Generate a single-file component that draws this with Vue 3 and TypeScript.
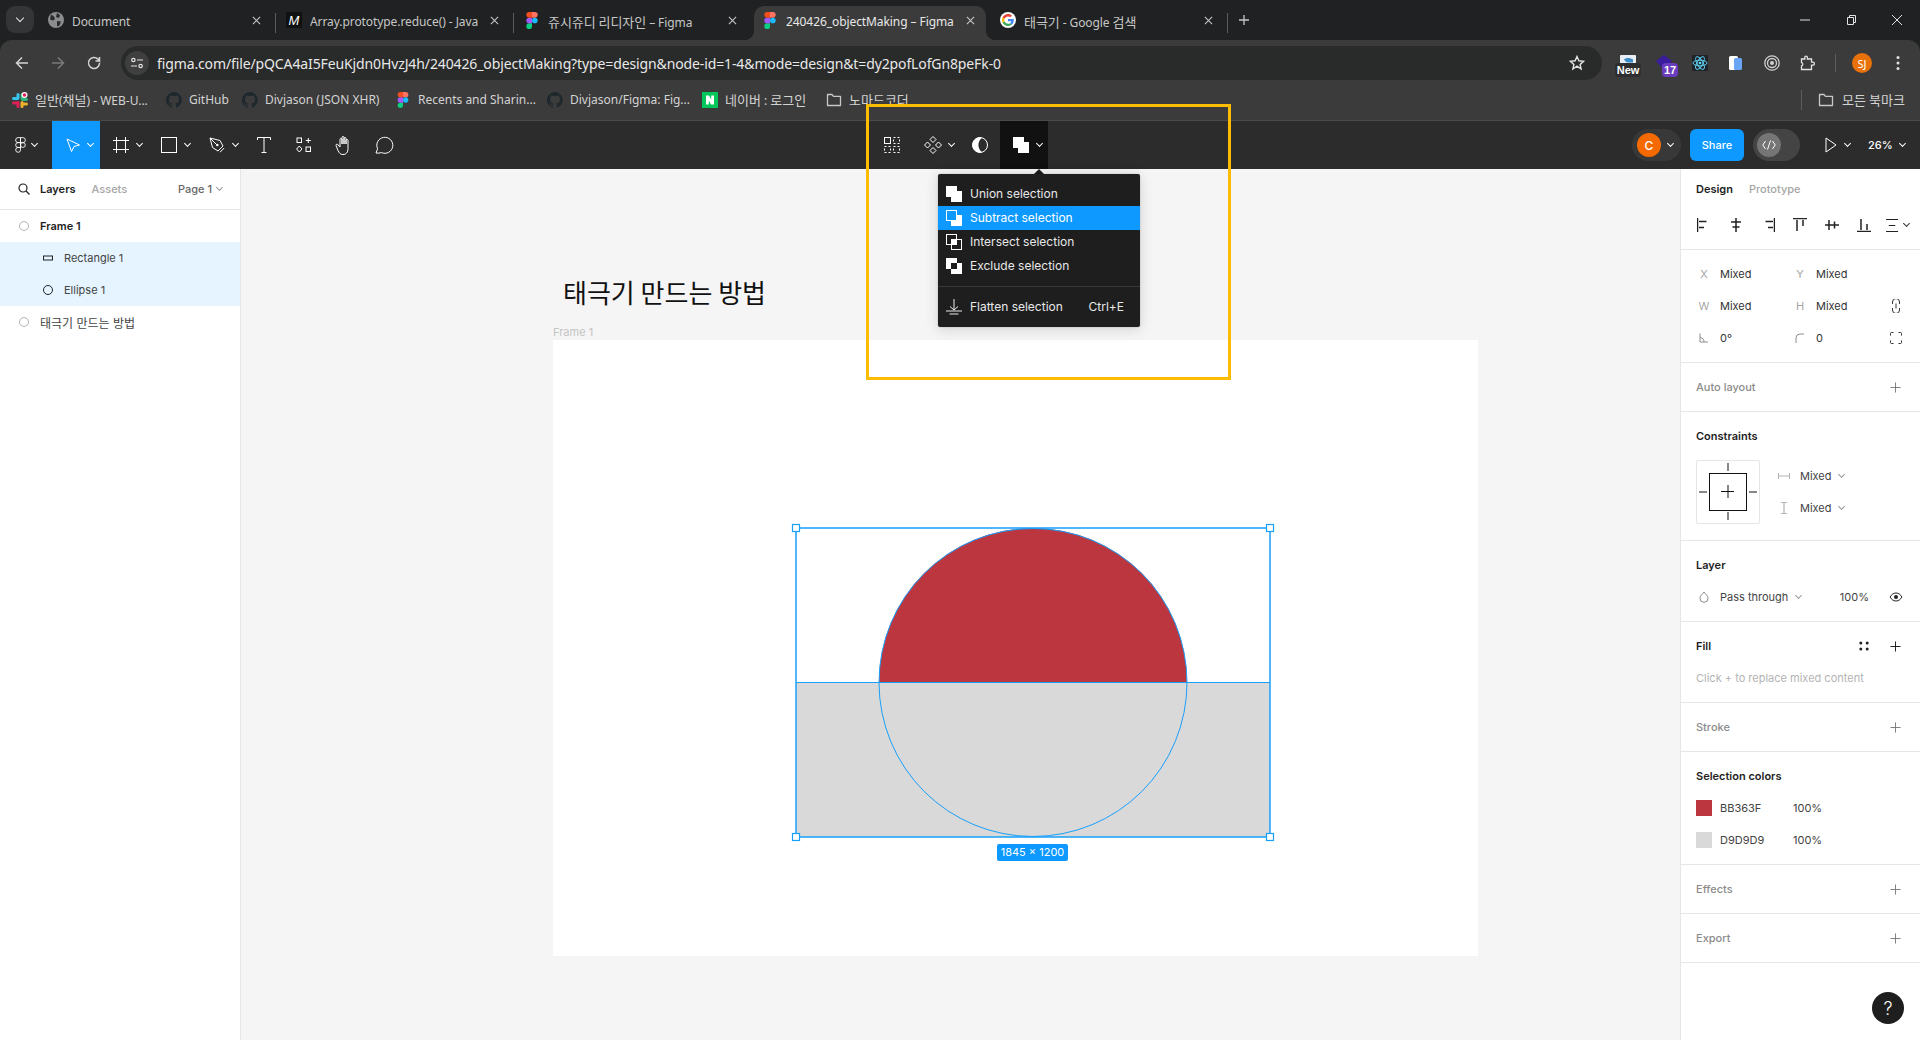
<script setup lang="ts">
interface Tab { title: string; icon: string; active?: boolean; sep?: boolean }
const tabs: Tab[] = [
  { title: 'Document', icon: 'globe', sep: true },
  { title: 'Array.prototype.reduce() - Java', icon: 'mdn', sep: true },
  { title: '쥬시쥬디 리디자인 – Figma', icon: 'figma' },
  { title: '240426_objectMaking – Figma', icon: 'figma', active: true },
  { title: '태극기 - Google 검색', icon: 'google', sep: true },
]
const bookmarks = [
  { title: '일반(채널) - WEB-U...', icon: 'slack', width: 154 },
  { title: 'GitHub', icon: 'github', width: 76 },
  { title: 'Divjason (JSON XHR)', icon: 'github', width: 153 },
  { title: 'Recents and Sharin...', icon: 'figma', width: 152 },
  { title: 'Divjason/Figma: Fig...', icon: 'github', width: 155 },
  { title: '네이버 : 로그인', icon: 'naver', width: 124 },
  { title: '노마드코더', icon: 'folder', width: 90 },
]
const boolItems = [
  { label: 'Union selection', icon: 'b-union' },
  { label: 'Subtract selection', icon: 'b-subtract', active: true },
  { label: 'Intersect selection', icon: 'b-intersect' },
  { label: 'Exclude selection', icon: 'b-exclude' },
]
const layers = [
  { name: 'Frame 1', icon: 'frame', strong: true },
  { name: 'Rectangle 1', icon: 'rect', child: true },
  { name: 'Ellipse 1', icon: 'ellipse', child: true },
  { name: '태극기 만드는 방법', icon: 'frame', ko: true },
]
const alignIcons = ['a-left', 'a-hc', 'a-right', 'a-top', 'a-vc', 'a-bottom']
const colors = [
  { hex: 'BB363F', css: '#bb363f' },
  { hex: 'D9D9D9', css: '#d9d9d9' },
]
const handles = [[796, 528], [1270, 528], [796, 837], [1270, 837]]

// Hangul runs are set a size larger so that their advance matches the reference's wider Korean face.
function segs(s: string): { text: string; ko: boolean }[] {
  return s
    .split(/([가-힣]+)/)
    .filter(Boolean)
    .map((text) => ({ text, ko: /[가-힣]/.test(text) }))
}
</script>

<template>
  <div class="page">
    <svg class="sprite" aria-hidden="true">
      <defs>
        <symbol id="figma" viewBox="0 0 12 18">
          <path d="M3 18a3 3 0 0 0 3-3v-3H3a3 3 0 0 0 0 6z" fill="#0acf83" />
          <path d="M0 9a3 3 0 0 1 3-3h3v6H3a3 3 0 0 1-3-3z" fill="#a259ff" />
          <path d="M0 3a3 3 0 0 1 3-3h3v6H3a3 3 0 0 1-3-3z" fill="#f24e1e" />
          <path d="M6 0h3a3 3 0 0 1 0 6H6z" fill="#ff7262" />
          <circle cx="9" cy="9" r="3" fill="#1abcfe" />
        </symbol>
        <symbol id="globe" viewBox="0 0 16 16">
          <circle cx="8" cy="8" r="8" fill="#8b8c8d" />
          <path d="M3 2.500l3 2 1 2.500-2 1.500-3-1zM9 1l3 2-1 3-3-1zM9 9l4 .5-1.500 4-2.500 1z" fill="#2a2b2c" />
        </symbol>
        <symbol id="mdn" viewBox="0 0 16 16">
          <rect width="16" height="16" fill="#111" />
          <text x="8" y="13" font-size="13" font-style="italic" font-family="Liberation Sans, sans-serif" fill="#fff" text-anchor="middle">M</text>
        </symbol>
        <symbol id="google" viewBox="0 0 16 16">
          <circle cx="8" cy="8" r="8" fill="#fff" />
          <path d="M13.800 8.200c0-.5 0-.9-.1-1.300H8v2.400h3.300c-.1.800-.6 1.400-1.200 1.900l1.900 1.400c1.100-1 1.800-2.600 1.800-4.400z" fill="#4285f4" />
          <path d="M8 14c1.600 0 3-.5 4-1.400l-1.900-1.400c-.5.400-1.200.6-2.100.6-1.600 0-2.900-1-3.400-2.500l-2 1.500C3.600 12.700 5.600 14 8 14z" fill="#34a853" />
          <path d="M4.600 9.300c-.3-.8-.3-1.800 0-2.600l-2-1.500c-.8 1.700-.8 3.900 0 5.600z" fill="#fbbc05" />
          <path d="M8 4.400c.9 0 1.700.3 2.300.9L12 3.600C11 2.600 9.600 2 8 2 5.600 2 3.600 3.300 2.600 5.200l2 1.500C5.100 5.400 6.400 4.400 8 4.400z" fill="#ea4335" />
        </symbol>
        <symbol id="slack" viewBox="0 0 16 16">
          <rect x="4.500" y="1" width="3" height="6.500" rx="1.500" fill="#36c5f0" />
          <rect x="0" y="5" width="7" height="3" rx="1.500" fill="#36c5f0" />
          <rect x="9" y="6" width="7" height="3" rx="1.500" fill="#2eb67d" />
          <rect x="8.500" y="1" width="3" height="7" rx="1.500" fill="#2eb67d" />
          <rect x="8.500" y="9" width="3" height="7" rx="1.500" fill="#ecb22e" />
          <rect x="9" y="10.500" width="7" height="3" rx="1.500" fill="#ecb22e" />
          <rect x="4.500" y="9" width="3" height="7" rx="1.500" fill="#e01e5a" />
          <rect x="0" y="9.500" width="7" height="3" rx="1.500" fill="#e01e5a" />
          <circle cx="12.500" cy="3" r="3" fill="#fff" /><circle cx="12.500" cy="3" r="1.800" fill="#e01e5a" />
        </symbol>
        <symbol id="github" viewBox="0 0 16 16">
          <path fill="#1e272c" d="M8 0a8 8 0 0 0-2.500 15.600c.4.100.5-.2.500-.4v-1.400c-2.200.5-2.700-1-2.700-1-.4-.9-.9-1.200-.9-1.200-.7-.5.100-.5.100-.5.800.100 1.200.8 1.200.8.700 1.200 1.900.9 2.300.7.100-.5.300-.9.500-1.100-1.800-.2-3.600-.9-3.600-4 0-.9.300-1.600.8-2.100-.1-.2-.4-1 .1-2.100 0 0 .7-.2 2.200.8a7.500 7.500 0 0 1 4 0c1.500-1 2.200-.8 2.200-.8.400 1.100.2 1.900.1 2.100.5.500.8 1.200.8 2.100 0 3.100-1.900 3.700-3.700 3.900.3.300.6.700.6 1.500v2.200c0 .2.100.5.500.4A8 8 0 0 0 8 0z" />
        </symbol>
        <symbol id="naver" viewBox="0 0 16 16">
          <rect width="16" height="16" fill="#03c75a" />
          <path d="M4 3.500h3l2.200 4v-4H12v9H9l-2.200-4v4H4z" fill="#fff" />
        </symbol>
        <symbol id="folder" viewBox="0 0 16 16">
          <path d="M1.500 2.500h4.500l1.500 1.800h7v9.200h-13z" fill="none" stroke="#c7c7c7" stroke-width="1.300" stroke-linejoin="round" />
        </symbol>
        <symbol id="plus" viewBox="0 0 12 12"><path d="M6 .5v11M.5 6h11" fill="none" stroke="currentColor" /></symbol>
        <symbol id="frame" viewBox="0 0 12 12"><circle cx="6" cy="6" r="4.500" fill="none" stroke="#b3b3b3" /></symbol>
        <symbol id="rect" viewBox="0 0 12 12"><rect x="1.500" y="4" width="9" height="4" fill="none" stroke="#222" stroke-width="1" /></symbol>
        <symbol id="ellipse" viewBox="0 0 12 12"><circle cx="6" cy="6" r="4.500" fill="none" stroke="#222" /></symbol>
        <symbol id="a-left" viewBox="0 0 14 14"><path d="M.5 0v14M2 3.500h7.500M2 9.500h5" fill="none" stroke="#222" stroke-width="1.500" /></symbol>
        <symbol id="a-hc" viewBox="0 0 14 14"><path d="M7 0v14M2 4h10M3.500 9h7" fill="none" stroke="#222" stroke-width="1.500" /></symbol>
        <symbol id="a-right" viewBox="0 0 14 14"><path d="M13.500 0v14M12 3.500H4.500M12 9.500H7" fill="none" stroke="#222" stroke-width="1.500" /></symbol>
        <symbol id="a-top" viewBox="0 0 14 14"><path d="M0 .5h14M4 2v11M10 2v6" fill="none" stroke="#222" stroke-width="1.500" /></symbol>
        <symbol id="a-vc" viewBox="0 0 14 14"><path d="M0 7h14M4 2v10M9.500 3.500v7" fill="none" stroke="#222" stroke-width="1.500" /></symbol>
        <symbol id="a-bottom" viewBox="0 0 14 14"><path d="M0 13.500h14M4 12V1M10 12V6" fill="none" stroke="#222" stroke-width="1.500" /></symbol>
        <symbol id="b-union" viewBox="0 0 16 16"><path d="M0 0h11v5h5v11H5v-5H0z" fill="#fff" /></symbol>
        <symbol id="b-subtract" viewBox="0 0 16 16"><path d="M11 5h5v11H5v-5h6z" fill="#fff" /><rect x=".5" y=".5" width="10" height="10" fill="none" stroke="#fff" /></symbol>
        <symbol id="b-intersect" viewBox="0 0 16 16"><rect x=".5" y=".5" width="10" height="10" fill="none" stroke="#fff" /><rect x="5.500" y="5.500" width="10" height="10" fill="none" stroke="#fff" /><rect x="5" y="5" width="6" height="6" fill="#fff" /></symbol>
        <symbol id="b-exclude" viewBox="0 0 16 16"><path d="M0 0h11v5H5v6H0zM11 5h5v11H5v-5h6z" fill="#fff" /></symbol>
      </defs>
    </svg>

    <header class="tabstrip">
      <div class="tab-search"><i class="chev chev-big"></i></div>
      <div v-for="t in tabs" :key="t.title" class="tab" :class="{ active: t.active, sep: t.sep }">
        <svg class="fav" :class="{ 'fav-figma': t.icon === 'figma' }"><use :href="'#' + t.icon" /></svg>
        <span class="tab-title"><span v-for="(s, i) in segs(t.title)" :key="i" :class="{ ko: s.ko }">{{ s.text }}</span></span>
        <svg class="tab-x" viewBox="0 0 10 10"><path d="M1 1l8 8M9 1l-8 8" fill="none" stroke="#c7c7c7" stroke-width="1.200" /></svg>
      </div>
      <svg class="newtab" viewBox="0 0 12 12"><path d="M6 1v10M1 6h10" fill="none" stroke="#c7c7c7" stroke-width="1.300" /></svg>
      <div class="winbtns">
        <svg viewBox="0 0 12 12"><path d="M1 6h10" stroke="#e3e3e3" fill="none" /></svg>
        <svg viewBox="0 0 12 12"><path d="M2.500 3.500h6v7h-6zM4.500 3.500v-2h6v7h-2" stroke="#e3e3e3" fill="none" /></svg>
        <svg viewBox="0 0 12 12"><path d="M1 1l10 10M11 1L1 11" stroke="#e3e3e3" fill="none" /></svg>
      </div>
    </header>

    <div class="chrome-body">
      <div class="navbar">
        <svg class="nav-ic" viewBox="0 0 16 16"><path d="M14 8H2.500M8 2.500L2.500 8 8 13.500" fill="none" stroke="#d5d5d5" stroke-width="1.500" /></svg>
        <svg class="nav-ic" viewBox="0 0 16 16"><path d="M2 8h11.500M8 2.500L13.500 8 8 13.500" fill="none" stroke="#7a7a7a" stroke-width="1.500" /></svg>
        <svg class="nav-ic" viewBox="0 0 16 16"><path d="M13.500 8a5.500 5.500 0 1 1-1.600-3.900L13.500 6V2M13.500 6H9.500" fill="none" stroke="#d5d5d5" stroke-width="1.500" /></svg>
        <div class="omnibox">
          <span class="site-ic">
            <svg viewBox="0 0 14 14"><path d="M7 4h6M1 10h6" stroke="#e3e3e3" fill="none" stroke-width="1.200" /><circle cx="3.400" cy="4" r="1.700" fill="none" stroke="#e3e3e3" stroke-width="1.200" /><circle cx="10.600" cy="10" r="1.700" fill="none" stroke="#e3e3e3" stroke-width="1.200" /></svg>
          </span>
          <span class="url">figma.com/file/pQCA4aI5FeuKjdn0HvzJ4h/240426_objectMaking?type=design&amp;node-id=1-4&amp;mode=design&amp;t=dy2pofLofGn8peFk-0</span>
          <svg class="star" viewBox="0 0 16 16"><path d="M8 1.500l1.900 4.300 4.600.5-3.400 3.100 1 4.600L8 11.200l-4.100 2.800 1-4.600L1.500 6.300l4.600-.5z" fill="none" stroke="#e3e3e3" stroke-width="1.400" /></svg>
        </div>
        <div class="exts">
          <span class="ext ext-new">
            <svg viewBox="0 0 16 16"><rect x="0" y="0" width="16" height="12" rx="1" fill="#e8eef5" /><path d="M4 4.500c2-2 6-2 9 0v3H8c-2 0-3-1.500-4-3z" fill="#3f8ccb" /></svg>
            <b>New</b>
          </span>
          <span class="ext ext-17">
            <svg viewBox="0 0 16 16"><path d="M8 0l8 6-8 9-8-9z" fill="#3b1c9c" /></svg>
            <b>17</b>
          </span>
          <span class="ext">
            <svg viewBox="0 0 16 16"><rect width="16" height="16" fill="#20232a" /><g fill="none" stroke="#61dafb" stroke-width=".9"><ellipse cx="8" cy="8" rx="7" ry="2.800" /><ellipse cx="8" cy="8" rx="7" ry="2.800" transform="rotate(60 8 8)" /><ellipse cx="8" cy="8" rx="7" ry="2.800" transform="rotate(120 8 8)" /></g><circle cx="8" cy="8" r="1.300" fill="#61dafb" /></svg>
          </span>
          <span class="ext">
            <svg viewBox="0 0 16 16"><rect x="1" y="1" width="9" height="14" rx="1.500" fill="#fff" /><rect x="6" y="3" width="8" height="12" rx="1.500" fill="#6aa6f8" /></svg>
          </span>
          <span class="ext">
            <svg viewBox="0 0 16 16"><circle cx="8" cy="8" r="7.200" fill="none" stroke="#cfcfcf" stroke-width="1.300" /><circle cx="8" cy="8" r="4.500" fill="none" stroke="#cfcfcf" stroke-width="1.300" /><circle cx="8" cy="8" r="2" fill="#cfcfcf" /></svg>
          </span>
          <span class="ext">
            <svg viewBox="0 0 16 16"><path d="M1.500 4h3.300V2.500a1.300 1.300 0 0 1 2.600 0V4h4.100v3.200h1.400a1.500 1.500 0 0 1 0 3h-1.400v4.300H1.500v-3.600a1.700 1.700 0 0 0 0-3.300z" fill="none" stroke="#e3e3e3" stroke-width="1.300" /></svg>
          </span>
          <span class="ext-sep"></span>
          <span class="profile">SJ</span>
          <svg class="dots" viewBox="0 0 4 16"><circle cx="2" cy="2.500" r="1.500" fill="#e3e3e3" /><circle cx="2" cy="8" r="1.500" fill="#e3e3e3" /><circle cx="2" cy="13.500" r="1.500" fill="#e3e3e3" /></svg>
        </div>
      </div>

      <div class="bookmarks">
        <div v-for="b in bookmarks" :key="b.title" class="bm" :style="{ width: b.width + 'px' }">
          <svg class="bm-ic"><use :href="'#' + b.icon" /></svg>
          <span class="bm-text"><span v-for="(s, i) in segs(b.title)" :key="i" :class="{ ko: s.ko }">{{ s.text }}</span></span>
        </div>
        <div class="bm-all">
          <span class="bm-sep"></span>
          <svg class="bm-ic bm-ic-all"><use href="#folder" /></svg>
          <span class="bm-text"><span v-for="(s, i) in segs('모든 북마크')" :key="i" :class="{ ko: s.ko }">{{ s.text }}</span></span>
        </div>
      </div>
    </div>

    <div class="toolbar">
      <div class="tb-left">
        <div class="tool tool-logo tool-caret">
          <svg class="logo" viewBox="0 0 12 18" fill="none" stroke="#fff"><path d="M6 .7H3.300a2.700 2.700 0 0 0 0 5.600H6zM6 .7h2.700a2.700 2.700 0 0 1 0 5.600H6zM6 6.300H3.300a2.700 2.700 0 0 0 0 5.500H6zM6 11.800H3.300a2.700 2.700 0 1 0 2.700 2.700z" /><circle cx="8.700" cy="9" r="2.700" /></svg>
          <i class="chev"></i>
        </div>
        <div class="tool tool-move tool-caret">
          <svg class="ic16" viewBox="0 0 16 16"><path d="M2 2l12.500 6L9 9.500l-2.500 5z" fill="none" stroke="#fff" stroke-linejoin="round" /></svg>
          <i class="chev"></i>
        </div>
        <div class="tool tool-caret">
          <svg class="ic16" viewBox="0 0 16 16"><path d="M3.500 0v16M12.500 0v16M0 3.500h16M0 12.500h16" fill="none" stroke="#fff" /></svg>
          <i class="chev"></i>
        </div>
        <div class="tool tool-caret">
          <svg class="ic16" viewBox="0 0 16 16"><rect x=".5" y=".5" width="15" height="15" fill="none" stroke="#fff" /></svg>
          <i class="chev"></i>
        </div>
        <div class="tool tool-caret">
          <svg class="ic16" viewBox="0 0 16 16"><path d="M1 1l10 2.500L14 9l-5 5-5.500-3.500zM1 1l6.300 6.300M11 15.200l4.200-4.200" fill="none" stroke="#fff" stroke-linejoin="round" /><circle cx="8.300" cy="8" r="1.300" fill="#fff" /></svg>
          <i class="chev"></i>
        </div>
        <div class="tool tool-s">
          <svg class="ic16" viewBox="0 0 16 16"><path d="M1.500 3V.5h13V3M8 .5v15M5.500 15.500h5" fill="none" stroke="#fff" /></svg>
        </div>
        <div class="tool tool-s">
          <svg class="ic16" viewBox="0 0 16 16"><rect x="1" y="1" width="4.500" height="4.500" fill="none" stroke="#fff" /><rect x="10" y="10" width="4.500" height="4.500" fill="none" stroke="#fff" /><path d="M3.300 9l2.700 3-2.700 3L.6 12zM12.300 1v5M9.800 3.500h5" fill="none" stroke="#fff" /></svg>
        </div>
        <div class="tool tool-s">
          <svg class="ic20" viewBox="0 0 20 20"><path d="M6 12V4.500a1 1 0 0 1 2 0V9 2.500a1 1 0 0 1 2 0V9 3.500a1 1 0 0 1 2 0V9 5.500a1 1 0 0 1 2 0v8c0 4-2 6-5 6-2.500 0-3.500-1-5-4L2 10.500a1 1 0 0 1 2-.5z" fill="none" stroke="#fff" stroke-linejoin="round" /></svg>
        </div>
        <div class="tool tool-s">
          <svg class="ic20" viewBox="0 0 20 20"><path d="M2 18l1.600-4.200A8 8 0 1 1 7.500 17.600 11 11 0 0 1 2 18z" fill="none" stroke="#fff" stroke-linejoin="round" /></svg>
        </div>
      </div>

      <div class="tb-center">
        <div class="tool">
          <svg class="ic16" viewBox="0 0 16 16"><rect x=".5" y=".5" width="6" height="6" fill="none" stroke="#fff" /><g fill="none" stroke="#fff" stroke-dasharray="2 2.000"><rect x="9.500" y=".5" width="6" height="6" /><rect x=".5" y="9.500" width="6" height="6" /><rect x="9.500" y="9.500" width="6" height="6" /></g></svg>
        </div>
        <div class="tool tool-comp tool-caret">
          <svg class="ic18" viewBox="0 0 18 18"><path d="M9 .5L12 3.500 9 6.500 6 3.500zM3.500 6L6.500 9 3.500 12 .5 9zM14.500 6L17.500 9l-3 3-3-3zM9 11.500l3 3-3 3-3-3z" fill="none" stroke="#fff" /></svg>
          <i class="chev"></i>
        </div>
        <div class="tool tool-s">
          <svg class="ic16" viewBox="0 0 16 16"><circle cx="8" cy="8" r="7.500" fill="none" stroke="#fff" /><path d="M10 .8A7.500 7.500 0 1 0 10 15.200 9 9 0 0 1 10 .8z" fill="#fff" /></svg>
        </div>
        <div class="tool tool-bool tool-caret">
          <svg class="ic16"><use href="#b-union" /></svg>
          <i class="chev"></i>
          <i class="caret"></i>
        </div>
      </div>

      <div class="tb-right">
        <div class="multi"><span class="avatar">C</span><i class="chev"></i></div>
        <button class="share">Share</button>
        <div class="devmode"><span class="knob">
          <svg viewBox="0 0 14 10"><path d="M3.500 1L.8 5l2.700 4M10.500 1l2.700 4-2.700 4M8.500.5l-3 9" fill="none" stroke="#fff" /></svg>
        </span></div>
        <svg class="play" viewBox="0 0 12 16"><path d="M1 1l10 7-10 7z" fill="none" stroke="#fff" /></svg>
        <i class="chev chev-play"></i>
        <span class="zoom">26%</span>
        <i class="chev chev-zoom"></i>
      </div>
    </div>

    <main class="workspace">
      <aside class="left">
        <div class="left-head">
          <svg class="search" viewBox="0 0 12 12"><circle cx="5" cy="5" r="4" fill="none" stroke="#222" stroke-width="1.200" /><path d="M8 8l3.500 3.500" stroke="#222" stroke-width="1.200" /></svg>
          <span class="lt-active">Layers</span>
          <span class="lt-muted">Assets</span>
          <span class="page-sel">Page 1 <i class="chev chev-muted"></i></span>
        </div>
        <div v-for="l in layers" :key="l.name" class="layer" :class="{ child: l.child, strong: l.strong, 'layer-ko': l.ko }">
          <svg class="layer-ic"><use :href="'#' + l.icon" /></svg>
          <span>{{ l.name }}</span>
        </div>
      </aside>

      <section class="canvas">
        <div class="title-node">태극기 만드는 방법</div>
        <div class="frame-label">Frame 1</div>
        <div class="frame"></div>
        <svg class="art" viewBox="241 169 1439 871">
          <rect x="796" y="682" width="474" height="155" fill="#d9d9d9" />
          <path d="M879 682a154 154 0 0 1 308 0z" fill="#bb363f" />
          <g fill="none" stroke="#18a0fb">
            <rect x="796" y="528" width="474" height="309" stroke-width="1.500" />
            <circle cx="1033" cy="682.500" r="154" />
            <path d="M796 682.500h474" stroke-width="1.200" />
          </g>
          <rect v-for="h in handles" :key="h.join()" :x="h[0] - 3.500" :y="h[1] - 3.500" width="7" height="7" fill="#fff" stroke="#18a0fb" stroke-width="1.200" />
        </svg>
        <div class="size-badge">1845 × 1200</div>
      </section>

      <aside class="right">
        <section class="sec sec-head">
          <div class="dz-tabs"><span class="lt-active">Design</span><span class="lt-muted">Prototype</span></div>
          <div class="aligns">
            <svg v-for="a in alignIcons" :key="a" class="al"><use :href="'#' + a" /></svg>
            <span class="dist">
              <svg viewBox="0 0 14 14"><path d="M0 .5h13M0 13.500h13M3 7h7" fill="none" stroke="#222" stroke-width="1.200" /></svg>
              <i class="chev chev-dark"></i>
            </span>
          </div>
        </section>

        <section class="sec sec-xy">
          <div class="xy-row">
            <span class="xy-lab">X</span><span class="xy-val">Mixed</span>
            <span class="xy-lab">Y</span><span class="xy-val">Mixed</span>
          </div>
          <div class="xy-row">
            <span class="xy-lab">W</span><span class="xy-val">Mixed</span>
            <span class="xy-lab">H</span><span class="xy-val">Mixed</span>
            <svg class="xy-end" viewBox="0 0 8 14"><path d="M.5 5V3a3.500 3.500 0 0 1 7 0v2M.5 9v2a3.500 3.500 0 0 0 7 0V9M4 4.500v5" fill="none" stroke="#333" /></svg>
          </div>
          <div class="xy-row">
            <span class="xy-lab"><svg class="xy-ic" viewBox="0 0 10 10"><path d="M1 .5V9h8M1 4.500a4.500 4.500 0 0 1 4 4.500" fill="none" stroke="#8c8c8c" /></svg></span><span class="xy-val">0°</span>
            <span class="xy-lab"><svg class="xy-ic" viewBox="0 0 10 10"><path d="M1 10V5a4 4 0 0 1 4-4h4" fill="none" stroke="#8c8c8c" /></svg></span><span class="xy-val">0</span>
            <svg class="xy-end xy-end-wide" viewBox="0 0 12 12"><path d="M.5 3.500v-2a1 1 0 0 1 1-1h2M8.500.5h2a1 1 0 0 1 1 1v2M11.500 8.500v2a1 1 0 0 1-1 1h-2M3.500 11.500h-2a1 1 0 0 1-1-1v-2" fill="none" stroke="#333" /></svg>
          </div>
        </section>

        <section class="sec sec-line"><span class="muted-h">Auto layout</span><svg class="plus plus-muted"><use href="#plus" /></svg></section>

        <section class="sec sec-cons">
          <div class="sec-title">Constraints</div>
          <div class="cons-body">
            <div class="cons-box">
              <i class="cb-inner"></i>
              <svg class="cb-plus" viewBox="0 0 64 64"><path d="M32 3v8M32 52v8M3 32h8M53 32h8M32 25v13M25 31.500h13" fill="none" stroke="#111" /></svg>
            </div>
            <div class="cons-sel">
              <div class="cs-row"><svg class="cs-ic" viewBox="0 0 12 12"><path d="M.5 3v6M11.500 3v6M1 6h10" stroke="#b3b3b3" fill="none" /></svg><span>Mixed</span><i class="chev chev-muted"></i></div>
              <div class="cs-row"><svg class="cs-ic" viewBox="0 0 12 12"><path d="M3 .5h6M3 11.500h6M6 1v10" stroke="#b3b3b3" fill="none" stroke-width="1.200" /></svg><span>Mixed</span><i class="chev chev-muted"></i></div>
            </div>
          </div>
        </section>

        <section class="sec sec-layer">
          <div class="sec-title">Layer</div>
          <div class="layer-row">
            <svg class="drop" viewBox="0 0 10 12"><path d="M5 1C3.500 3 1 4.800 1 7.300a4 4 0 0 0 8 0C9 4.800 6.500 3 5 1z" fill="none" stroke="#8c8c8c" /></svg>
            <span class="blend">Pass through</span><i class="chev chev-muted"></i>
            <span class="opacity">100%</span>
            <svg class="eye" viewBox="0 0 14 10"><path d="M1 5c1.500-2.500 3.500-4 6-4s4.500 1.500 6 4c-1.500 2.500-3.500 4-6 4S2.500 7.500 1 5z" fill="none" stroke="#222" /><circle cx="7" cy="5" r="2" fill="#222" /></svg>
          </div>
        </section>

        <section class="sec sec-fill">
          <div class="fill-head">
            <div class="sec-title">Fill</div>
            <svg class="dots4" viewBox="0 0 10 10"><circle cx="1.800" cy="2" r="1.500" /><circle cx="8.200" cy="2" r="1.500" /><circle cx="1.800" cy="8" r="1.500" /><circle cx="8.200" cy="8" r="1.500" /></svg>
            <svg class="plus plus-dark"><use href="#plus" /></svg>
          </div>
          <div class="fill-note">Click + to replace mixed content</div>
        </section>

        <section class="sec sec-line"><span class="muted-h">Stroke</span><svg class="plus plus-muted"><use href="#plus" /></svg></section>

        <section class="sec sec-colors">
          <div class="sec-title">Selection colors</div>
          <div class="color-list">
            <div v-for="c in colors" :key="c.hex" class="color-row">
              <i class="swatch" :style="{ background: c.css }"></i>
              <span class="hex">{{ c.hex }}</span>
              <span>100%</span>
            </div>
          </div>
        </section>

        <section class="sec sec-line"><span class="muted-h">Effects</span><svg class="plus plus-muted"><use href="#plus" /></svg></section>
        <section class="sec sec-line"><span class="muted-h">Export</span><svg class="plus plus-muted"><use href="#plus" /></svg></section>
      </aside>
    </main>

    <div class="bool-menu">
      <div v-for="m in boolItems" :key="m.label" class="menu-row" :class="{ on: m.active }">
        <svg class="ic16"><use :href="'#' + m.icon" /></svg>
        <span>{{ m.label }}</span>
      </div>
      <div class="menu-sep"></div>
      <div class="menu-row">
        <svg class="ic16" viewBox="0 0 16 16"><path d="M8 1v11M4 8.500l4 3.500 4-3.500M0 13h16M3.500 16h9" transform="translate(0 -1)" fill="none" stroke="#e8e8e8" /></svg>
        <span>Flatten selection</span>
        <span class="shortcut">Ctrl+E</span>
      </div>
    </div>

    <div class="highlight"></div>
    <button class="help">?</button>
  </div>
</template>

<style>
html, body { margin: 0; background: #fff; }
</style>

<style scoped>
.page { position: relative; width: 1920px; height: 1040px; overflow: hidden; display: flex; flex-direction: column; font-family: Inter, "Noto Sans CJK KR", sans-serif; font-size: 11px; color: #333; background: #1f2122; }
.sprite { position: absolute; width: 0; height: 0; }
.chev { display: inline-block; width: 4px; height: 4px; border-right: 1px solid #fff; border-bottom: 1px solid #fff; transform: rotate(45deg); flex: none; margin-top: -3px; }
.ko { font-size: 13px; }

.tabstrip { height: 40px; flex: none; display: flex; align-items: flex-end; font-family: "Noto Sans", "Noto Sans CJK KR", sans-serif; font-size: 12px; color: #c7c7c7; box-sizing: border-box; padding-left: 6px; }
.tab-search { width: 28px; height: 27px; margin: 0 4px 7px 0; background: #343536; border-radius: 9px; display: flex; align-items: center; justify-content: center; }
.chev-big { width: 5px; height: 5px; border-width: 1.500px; border-color: #e3e3e3; }
.tab { position: relative; width: 238px; height: 34px; box-sizing: border-box; padding: 0 0 6px 10px; display: flex; align-items: center; flex: none; }
.tab.sep::after { content: ""; position: absolute; right: 0; top: 7px; width: 1px; height: 20px; background: #5a5b5c; }
.tab.active { color: #e8e8e8; }
.tab.active::before { content: ""; position: absolute; left: 2px; right: 4px; top: 0; bottom: 0; background: #3b3b3b; border-radius: 10px 10px 0 0; }
.tab.active::after { content: ""; position: absolute; left: -8px; right: -6px; bottom: 0; height: 10px; background: radial-gradient(circle at 0 0, transparent 10px, #3b3b3b 10.500px) left / 10px 10px no-repeat, radial-gradient(circle at 100% 0, transparent 10px, #3b3b3b 10.500px) right / 10px 10px no-repeat; }
.fav { position: relative; width: 16px; height: 16px; flex: none; margin-right: 8px; }
.fav-figma { height: 17px; }
.tab-title { position: relative; width: 170px; margin-top: 2px; overflow: hidden; white-space: nowrap; flex: none; letter-spacing: -.08px; }
.tab-x { position: relative; width: 9px; height: 9px; margin-left: 10px; flex: none; }
.newtab { width: 12px; height: 12px; margin: 0 0 14px 10px; flex: none; }
.winbtns { margin: 0 17px 14px auto; display: flex; gap: 34px; }
.winbtns svg { width: 12px; height: 12px; }

.chrome-body { flex: none; background: #3b3b3b; border-radius: 12px 12px 0 0; }
.navbar { height: 40px; display: flex; align-items: center; padding: 0 0 0 14px; box-sizing: border-box; }
.nav-ic { width: 16px; height: 16px; margin: 6px 20px 0 0; flex: none; }
.nav-ic:nth-child(3) { margin-right: 19px; }
.omnibox { width: 1481px; height: 34px; margin-top: 6px; background: #292a2a; border-radius: 17px; display: flex; align-items: center; padding: 0 17px 0 4px; box-sizing: border-box; flex: none; }
.site-ic { width: 24px; height: 24px; border-radius: 50%; background: #3f3f3f; display: flex; align-items: center; justify-content: center; flex: none; margin-right: 8px; }
.site-ic svg { width: 14px; height: 14px; }
.url { font-family: "Noto Sans", sans-serif; font-size: 14px; color: #e8e8e8; white-space: nowrap; flex: 1; letter-spacing: -.12px; }
.star { width: 16px; height: 16px; flex: none; }
.exts { flex: 1; display: flex; align-items: center; margin-top: 6px; padding-left: 18px; }
.ext { position: relative; width: 16px; height: 16px; margin-right: 20px; flex: none; }
.ext svg { width: 16px; height: 16px; display: block; }
.ext b { position: absolute; font: 700 11px "Liberation Sans", sans-serif; color: #fff; text-align: center; border-radius: 4px; }
.ext-new b { left: -5px; top: 8px; width: 26px; height: 14px; line-height: 14px; background: #2e2e2e; }
.ext-17 b { left: 6px; top: 8px; width: 16px; height: 14px; line-height: 14px; background: #6a3cc0; }
.ext-sep { width: 1px; height: 18px; background: #5c5c5c; margin-left: -1px; margin-right: 16px; flex: none; }
.profile { width: 20px; height: 20px; border-radius: 50%; background: #e8710a; color: #fff; font: 11px "Noto Sans", sans-serif; display: flex; align-items: center; justify-content: center; flex: none; }
.dots { width: 4px; height: 16px; margin-left: 24px; flex: none; }

.bookmarks { height: 41px; display: flex; align-items: center; padding-left: 12px; box-sizing: border-box; font-family: "Noto Sans", "Noto Sans CJK KR", sans-serif; font-size: 12px; color: #d3d3d3; border-bottom: 1px solid #4a4a4a; }
.bm { display: flex; align-items: center; flex: none; white-space: nowrap; }
.bm-text { margin-top: -2px; }
.bm-ic { width: 16px; height: 16px; margin-right: 7px; flex: none; }
.bm-ic-all { margin-right: 8px; }
.bm-all { margin-left: auto; display: flex; align-items: center; padding-right: 15px; }
.bm-sep { width: 1px; height: 20px; background: #5c5c5c; margin-right: 16px; }

.toolbar { height: 48px; flex: none; background: #2c2c2c; display: grid; grid-template-columns: 868px 180px 1fr; color: #fff; }
.tb-left, .tb-center, .tb-right { display: flex; align-items: stretch; }
.tool { width: 48px; display: flex; align-items: center; justify-content: center; flex: none; position: relative; }
.tool-caret { justify-content: flex-start; padding-left: 13px; gap: 8px; box-sizing: border-box; }
.tool-logo { width: 52px; padding-left: 15px; gap: 6px; }
.logo { width: 11px; height: 16px; flex: none; }
.tool-s { width: 40px; }
.tool-comp { width: 44px; padding-left: 8px; gap: 7px; }
.tool-move { background: #0d99ff; gap: 7px; }
.tool-bool { background: #111; }
.ic16 { width: 16px; height: 16px; flex: none; }
.ic18 { width: 18px; height: 18px; flex: none; }
.ic20 { width: 20px; height: 20px; flex: none; }
.caret { position: absolute; left: 34px; bottom: -5px; width: 0; height: 0; border-left: 5px solid transparent; border-right: 5px solid transparent; border-bottom: 5px solid #1e1e1e; z-index: 5; }
.tb-right { align-items: center; padding-left: 584px; }
.multi { width: 49px; height: 32px; background: #383838; border-radius: 16px; display: flex; align-items: center; padding-left: 5px; box-sizing: border-box; gap: 7px; flex: none; }
.avatar { width: 24px; height: 24px; border-radius: 50%; background: #f56a00; display: flex; align-items: center; justify-content: center; font-size: 12px; font-weight: 500; flex: none; }
.share { width: 54px; height: 32px; margin-left: 9px; background: #0d99ff; border: 0; border-radius: 6px; color: #fff; font: 500 11px Inter, sans-serif; flex: none; padding: 0; }
.devmode { width: 47px; height: 32px; margin-left: 9px; background: #444; border-radius: 16px; display: flex; align-items: center; padding-left: 4px; box-sizing: border-box; flex: none; }
.knob { width: 24px; height: 24px; border-radius: 50%; background: #757575; display: flex; align-items: center; justify-content: center; }
.knob svg { width: 14px; height: 10px; }
.play { width: 12px; height: 16px; margin-left: 25px; flex: none; }
.chev-play { margin-left: 8px; }
.zoom { margin-left: 18px; font-size: 11px; font-weight: 500; }
.chev-zoom { margin-left: 7px; }

.workspace { flex: 1; min-height: 0; display: flex; background: #f5f5f5; }
.left { width: 241px; flex: none; background: #fff; border-right: 1px solid #e6e6e6; box-sizing: border-box; }
.left-head { height: 41px; border-bottom: 1px solid #e6e6e6; box-sizing: border-box; display: flex; align-items: center; padding-left: 18px; }
.search { width: 12px; height: 12px; margin-right: 10px; flex: none; }
.lt-active { font-weight: 600; color: #1e1e1e; }
.lt-muted { color: #a6a6a6; font-weight: 500; }
.left-head .lt-muted { margin-left: 16px; }
.page-sel { margin-left: auto; margin-right: 18px; color: #666; display: flex; align-items: center; gap: 5px; font-weight: 500; }
.chev-muted { border-color: #999; }
.chev-dark { border-color: #333; }
.layer { height: 32px; display: flex; align-items: center; padding-left: 18px; color: #444; }
.layer.strong { font-weight: 600; color: #1e1e1e; }
.layer.child { background: #e5f4ff; padding-left: 42px; }
.layer-ko { font-size: 12px; }
.layer-ic { width: 12px; height: 12px; margin-right: 10px; flex: none; }

.canvas { flex: 1; position: relative; background: #f5f5f5; min-width: 0; }
.title-node { position: absolute; left: 322px; top: 101px; font: 26px/44px "Noto Sans CJK KR", sans-serif; color: #111; white-space: nowrap; }
.frame-label { position: absolute; left: 312px; top: 156px; font: 11px/14px Inter, sans-serif; color: #c4c4c4; }
.frame { position: absolute; left: 312px; top: 171px; width: 925px; height: 616px; background: #fff; }
.art { position: absolute; left: 0; top: 0; width: 1439px; height: 871px; }
.size-badge { position: absolute; left: 756px; top: 675px; width: 71px; height: 17px; background: #0d99ff; color: #fff; font: 11px/17px Inter, sans-serif; text-align: center; border-radius: 2px; }

.right { width: 240px; flex: none; background: #fff; border-left: 1px solid #e6e6e6; box-sizing: border-box; }
.sec { border-bottom: 1px solid #e6e6e6; box-sizing: border-box; padding: 0 15px; }
.sec-head { height: 81px; }
.dz-tabs { height: 40px; display: flex; align-items: center; gap: 16px; }
.dz-tabs .lt-muted { font-weight: 500; }
.aligns { display: flex; align-items: center; height: 32px; margin-left: 1px; gap: 18px; }
.al { width: 14px; height: 14px; flex: none; }
.dist { display: flex; align-items: center; gap: 5px; margin-left: -3px; }
.dist svg { width: 13px; height: 13px; }
.sec-xy { height: 113px; padding-top: 8px; }
.xy-row { height: 32px; display: grid; grid-template-columns: 24px 72px 24px 72px 16px; align-items: center; }
.xy-lab { color: #a6a6a6; display: flex; justify-content: center; padding-right: 8px; box-sizing: border-box; }
.xy-ic { width: 10px; height: 10px; }
.xy-val { color: #333; }
.xy-end { width: 8px; height: 14px; justify-self: center; }
.xy-end-wide { width: 12px; height: 12px; }
.sec-line { height: 49px; display: flex; align-items: center; justify-content: space-between; padding-right: 19px; }
.muted-h { color: #8c8c8c; font-weight: 500; }
.plus { width: 11px; height: 11px; flex: none; }
.plus-muted { color: #777; }
.plus-dark { color: #111; }
.sec-title { font-weight: 600; color: #1e1e1e; height: 16px; line-height: 16px; }
.sec-cons { height: 129px; padding-top: 16px; }
.cons-body { display: flex; margin-top: 16px; }
.cons-box { position: relative; width: 64px; height: 64px; border: 1px solid #e6e6e6; border-radius: 2px; box-sizing: border-box; flex: none; }
.cb-inner { position: absolute; left: 12px; top: 12px; width: 38px; height: 38px; border: 1px solid #111; box-sizing: border-box; }
.cb-plus { position: absolute; left: -1px; top: -1px; width: 64px; height: 64px; }
.cons-sel { margin-left: 18px; }
.cs-row { height: 32px; display: flex; align-items: center; color: #444; }
.cs-ic { width: 12px; height: 12px; margin-right: 10px; flex: none; }
.cs-row .chev { margin-left: 7px; }
.sec-layer { height: 81px; padding-top: 16px; }
.layer-row { height: 32px; display: flex; align-items: center; margin-top: 8px; padding-right: 2px; }
.drop { width: 10px; height: 12px; margin: 0 11px 0 3px; flex: none; }
.blend { color: #444; }
.layer-row .chev { margin-left: 8px; }
.opacity { margin-left: auto; color: #444; }
.eye { width: 14px; height: 10px; margin-left: 20px; flex: none; }
.sec-fill { height: 81px; padding-top: 16px; padding-right: 19px; }
.fill-head { display: flex; align-items: center; }
.fill-head .sec-title { flex: 1; }
.dots4 { width: 10px; height: 10px; margin-right: 21px; fill: #222; }
.fill-note { color: #b3b3b3; margin-top: 16px; height: 16px; line-height: 16px; }
.sec-colors { height: 113px; padding-top: 16px; }
.color-list { margin-top: 8px; }
.color-row { height: 32px; display: flex; align-items: center; color: #444; }
.swatch { width: 16px; height: 16px; margin-right: 8px; flex: none; }
.hex { width: 73px; }

.bool-menu { position: absolute; left: 938px; top: 174px; width: 202px; padding: 8px 0; box-sizing: border-box; background: #1e1e1e; border-radius: 2px; box-shadow: 0 2px 14px rgba(0, 0, 0, .15), 0 0 2px rgba(0, 0, 0, .2); color: #e8e8e8; font: 12px Inter, sans-serif; z-index: 10; }
.menu-row { height: 24px; display: flex; align-items: center; padding: 0 16px 0 8px; gap: 8px; }
.menu-row span { margin-top: -1px; }
.menu-row.on { background: #0d99ff; color: #fff; }
.menu-sep { height: 1px; background: #383838; margin: 8px 0; }
.shortcut { margin-left: auto; }

.highlight { position: absolute; left: 866px; top: 104px; width: 365px; height: 276px; box-sizing: border-box; border: 3px solid #fcbc00; z-index: 20; pointer-events: none; }
.help { position: absolute; left: 1872px; top: 992px; width: 32px; height: 32px; border-radius: 50%; background: #1e1e1e; border: 0; color: #fff; font: 300 18px Inter, sans-serif; padding: 0; }
</style>
